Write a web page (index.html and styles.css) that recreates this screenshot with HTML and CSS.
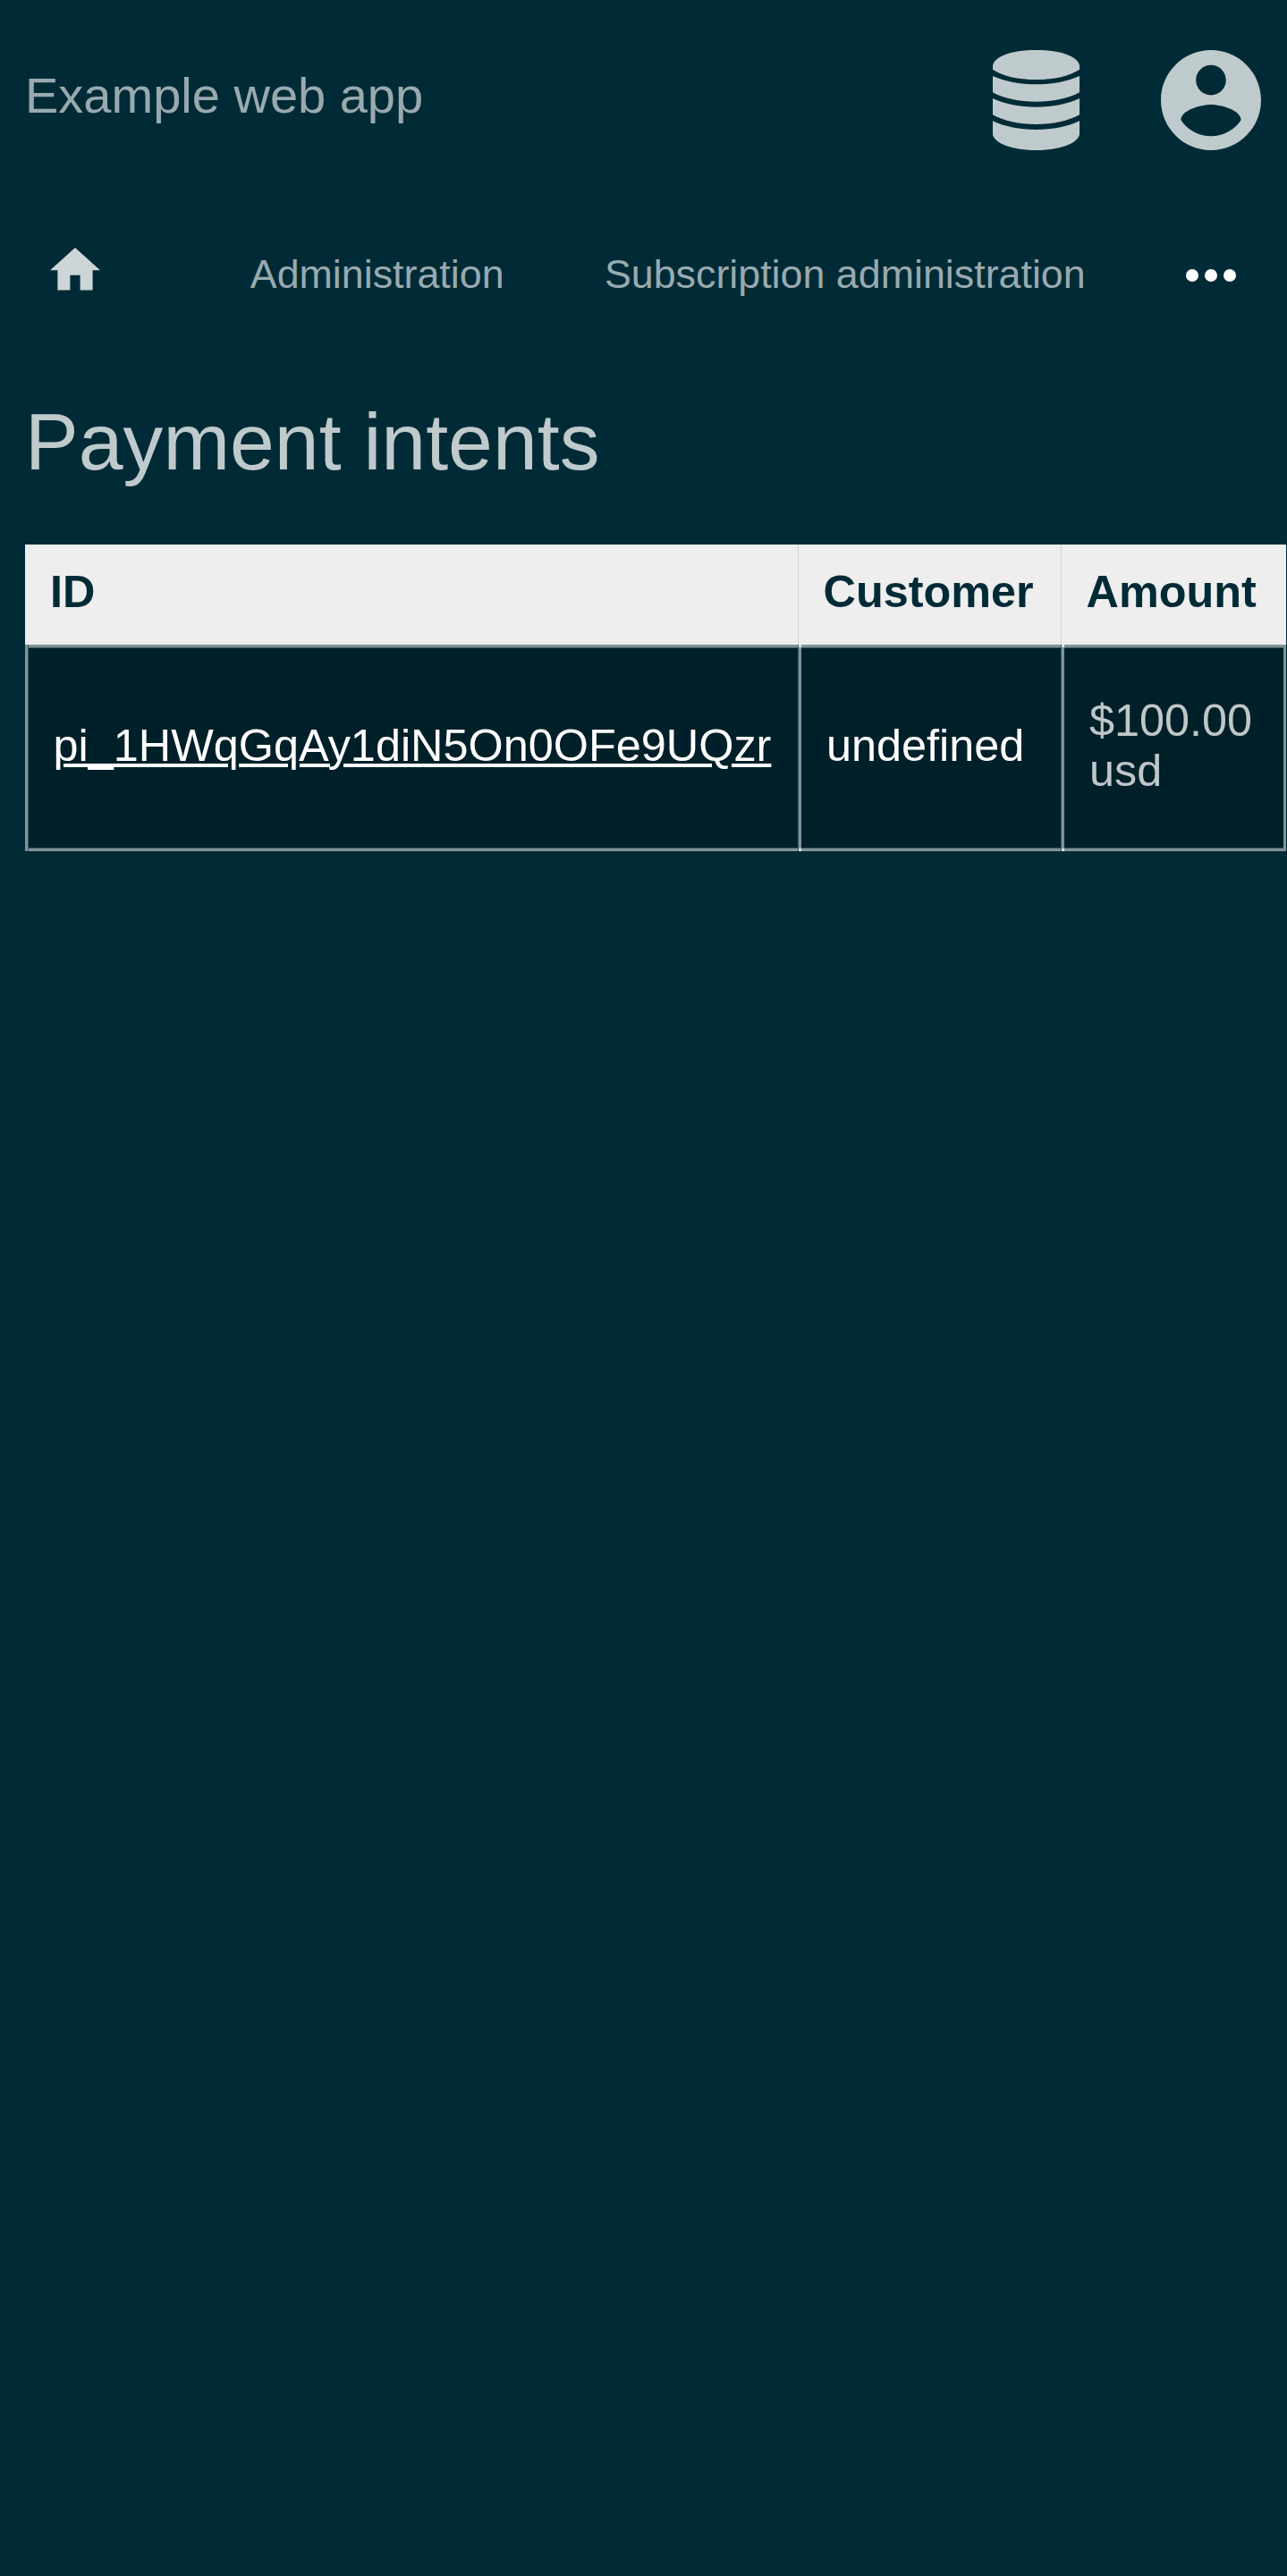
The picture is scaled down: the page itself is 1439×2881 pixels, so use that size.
FILE: index.html
```html
<!DOCTYPE html>
<html lang="en">
<head>
<meta charset="utf-8">
<title>Payment intents</title>
<link rel="stylesheet" href="styles.css">
</head>
<body>
<header class="header">
  <a class="brand">Example web app</a>
  <div class="menus">
    <svg class="icon-data" viewBox="90 78 291 336" preserveAspectRatio="none">
      <path d="M90 130C95 100 150 78 235.500 78S376 100 381 130V143C350 165 295 177 235.500 177S120 165 90 143Z"/>
      <path d="M90 165C130 183 180 193 235.500 193S341 183 381 165V220C345 241 290 251 235.500 251S125 241 90 220Z"/>
      <path d="M90 240C130 259 180 269 235.500 269S341 259 381 240V295C345 316 290 327 235.500 327S125 316 90 295Z"/>
      <path d="M90 316C130 335 180 345 235.500 345S341 335 381 316V362C374 392 310 414 235.500 414S97 392 90 362Z"/>
    </svg>
    <svg class="icon-user" viewBox="2 2 20 20">
      <path d="M12 2C6.480 2 2 6.480 2 12s4.480 10 10 10 10-4.480 10-10S17.520 2 12 2zm0 3c1.660 0 3 1.340 3 3s-1.340 3-3 3-3-1.340-3-3 1.340-3 3-3zm0 14.200c-2.500 0-4.710-1.280-6-3.220.030-1.990 4-3.080 6-3.080 1.990 0 5.970 1.090 6 3.080-1.290 1.940-3.500 3.220-6 3.220z"/>
    </svg>
  </div>
</header>
<nav class="nav">
  <svg class="icon-home" viewBox="2 3 20 17"><path d="M10 20v-6h4v6h5v-8h3L12 3 2 12h3v8z"/></svg>
  <a class="nav-link">Administration</a>
  <a class="nav-link">Subscription administration</a>
  <svg class="icon-more" viewBox="0 0 56 14"><circle cx="7" cy="7" r="7"/><circle cx="28" cy="7" r="7"/><circle cx="49" cy="7" r="7"/></svg>
</nav>
<main class="content">
  <h1 class="title">Payment intents</h1>
  <div class="table">
    <div class="head">ID</div>
    <div class="head">Customer</div>
    <div class="head">Amount</div>
    <div class="cell first"><a class="link">pi_1HWqGqAy1diN5On0OFe9UQzr</a></div>
    <div class="cell inner"><a>undefined</a></div>
    <div class="cell inner last">$100.00 usd</div>
  </div>
</main>
</body>
</html>
```
FILE: styles.css
```css
* { box-sizing: border-box; }
body {
  margin: 0;
  min-height: 2881px;
  overflow: hidden;
  background: #002b36;
  color: #bfcacd;
  font-family: "Liberation Sans", Arial, sans-serif;
}
svg { display: block; fill: #bfcacd; }
.header {
  display: flex;
  justify-content: space-between;
  height: 224px;
  padding: 56px 29px 0 28px;
}
.brand { font-size: 56px; line-height: 101px; color: #99aaaf; }
.menus { display: flex; gap: 91px; }
.icon-data { width: 97px; height: 112px; }
.icon-user { width: 112px; height: 112px; }
.nav {
  display: flex;
  align-items: flex-start;
  justify-content: space-between;
  height: 196px;
  padding: 53px 57px 0 56px;
}
.icon-home { width: 56px; height: 47.6px; fill: #ccd5d7; margin-right: 55.5px; }
.nav-link { font-size: 44.8px; line-height: 58px; color: #99aaaf; white-space: nowrap; }
.icon-more { width: 56px; height: 14px; margin-top: 24px; fill: #fff; }
.content { padding-left: 28px; }
.title {
  height: 189px;
  margin: 0;
  padding-top: 14px;
  font-size: 89.6px;
  font-weight: 400;
  line-height: 120px;
}
.table {
  display: grid;
  grid-template-columns: 864px 294px 252px;
  grid-template-rows: 112px 231px;
  font-size: 50.4px;
  line-height: 56px;
}
.head {
  padding: 25px 28px 0;
  background: #eee;
  color: #002b36;
  font-weight: 700;
}
.head + .head { padding-left: 27.5px; border-left: 1px solid #cfd6d8; }
.cell {
  display: flex;
  align-items: center;
  padding: 0 28px 6px 32px;
  background:
    linear-gradient(#809297, #809297) 0 0 / 100% 3px no-repeat,
    linear-gradient(#405960, #405960) 0 3px / 100% 1px no-repeat,
    linear-gradient(#809297, #809297) 0 100% / 100% 3px no-repeat,
    linear-gradient(#405960, #405960) 0 227px / 100% 1px no-repeat,
    #002029;
}
.cell a { color: #fff; }
.first {
  border-left: 3px solid #809297;
  box-shadow: inset 1px 0 #405960;
  padding-left: 28.5px;
}
.inner {
  position: relative;
}
.inner::before {
  content: "";
  position: absolute;
  inset: 0 auto 0 0;
  width: 4px;
  background:
    linear-gradient(#dfe4e6, #dfe4e6) 1px 0 / 3px 3px no-repeat,
    linear-gradient(#dfe4e6, #dfe4e6) 1px 100% / 3px 3px no-repeat,
    linear-gradient(90deg, #405960 1px, #809297 1px);
}
.last {
  color: #bfc7c9;
  border-right: 3px solid #809297;
}
.link {
  text-decoration: underline;
  text-decoration-thickness: 4px;
  text-underline-offset: 3px;
}
```
